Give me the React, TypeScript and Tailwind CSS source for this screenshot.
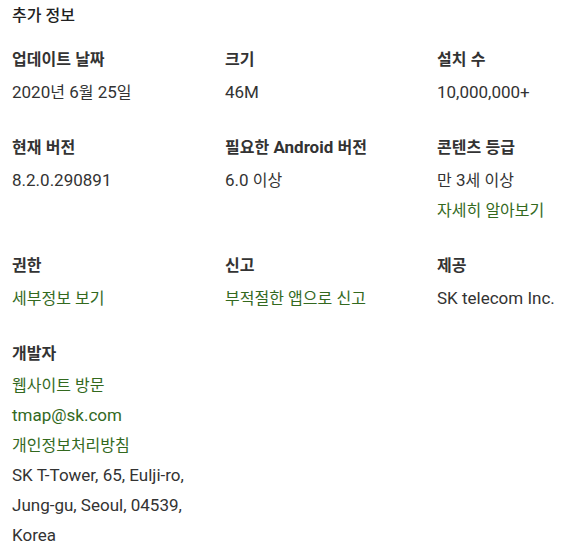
const font = { fontFamily: '"Roboto", "Noto Sans CJK KR", sans-serif' };

type Item = { title: string; dev?: boolean; lines: { text: string; link?: boolean }[] };

const items: Item[] = [
  { title: '업데이트 날짜', lines: [{ text: '2020년 6월 25일' }] },
  { title: '크기', lines: [{ text: '46M' }] },
  { title: '설치 수', lines: [{ text: '10,000,000+' }] },
  { title: '현재 버전', lines: [{ text: '8.2.0.290891' }] },
  { title: '필요한 Android 버전', lines: [{ text: '6.0 이상' }] },
  {
    title: '콘텐츠 등급',
    lines: [{ text: '만 3세 이상' }, { text: '자세히 알아보기', link: true }],
  },
  { title: '권한', lines: [{ text: '세부정보 보기', link: true }] },
  { title: '신고', lines: [{ text: '부적절한 앱으로 신고', link: true }] },
  { title: '제공', lines: [{ text: 'SK telecom Inc.' }] },
  {
    title: '개발자',
    dev: true,
    lines: [
      { text: '웹사이트 방문', link: true },
      { text: 'tmap@sk.com', link: true },
      { text: '개인정보처리방침', link: true },
      { text: 'SK T-Tower, 65, Eulji-ro,' },
      { text: 'Jung-gu, Seoul, 04539,' },
      { text: 'Korea' },
    ],
  },
];

// latin runs are set a touch larger than hangul, as in the reference
const Mixed = ({ text }: { text: string }) => (
  <>
    {text.split(/([\uAC00-\uD7A3]+)/).map((part, i) =>
      /[\uAC00-\uD7A3]/.test(part) ? (
        <span key={i} className="text-[16px] leading-none">
          {part}
        </span>
      ) : (
        part
      ),
    )}
  </>
);

const InfoCell = ({ item }: { item: Item }) => (
  <div className="flex flex-col">
    <h3 className="h-6 text-[17px] leading-6 font-bold text-[#333333]">
      <Mixed text={item.title} />
    </h3>
    <div className={`${item.dev ? 'mt-[5px]' : 'mt-[6px]'} flex flex-col`}>
      {item.lines.map((line) => (
        <span
          key={line.text}
          className={`h-[30px] text-[17px] leading-[30px] ${line.link ? 'text-[#33691e]' : 'text-[#333333]'}`}
        >
          <Mixed text={line.text} />
        </span>
      ))}
    </div>
  </div>
);

export default function App() {
  return (
    <div className="w-[565px] h-[552px] overflow-hidden bg-white pl-[12px] pt-[4px]" style={font}>
      <h2 className="h-6 text-[16px] leading-6 font-medium text-[#212121]">추가 정보</h2>
      <div className="mt-[19px] grid grid-cols-[213px_212px_1fr] gap-y-[28px]">
        {items.map((item) => (
          <InfoCell key={item.title} item={item} />
        ))}
      </div>
    </div>
  );
}
